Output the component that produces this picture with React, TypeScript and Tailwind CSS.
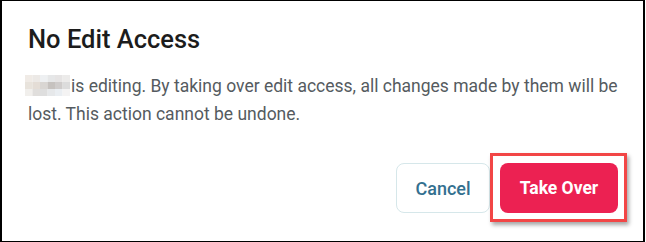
import React from "react";

const blur = [
  ["#f0ebe6", "#ece9e6", "#eef0f2", "#e6e7e8", "#e6e4e4", "#ecebea"],
  ["#e8e3dc", "#e4ddd6", "#d9d6d3", "#c6c2bf", "#cfcccb", "#dcdcdc"],
  ["#f1efec", "#e0dedc", "#dedede", "#e6e8ea", "#eaeef2", "#f4f3f3"],
];

export default function App() {
  return (
    <div className="w-[646px] h-[242px] bg-white">
      <div
        className="w-[645px] h-[242px] border-l-2 border-t border-r-2 border-b border-black bg-white flex flex-col pl-[26px] pr-[22px]"
        style={{ fontFamily: "Roboto, 'Liberation Sans', sans-serif" }}
      >
        <h1 className="mt-[22px] text-[25.5px] leading-[32px] font-medium text-[#1c1c1c]">
          No Edit Access
        </h1>
        <p className="mt-[17px] text-[17.5px] leading-[28px] text-[#555b60]">
          <svg
            width="45"
            height="21"
            viewBox="0 0 45 21"
            className="inline-block align-[-4px] ml-[-3px] mr-[1px]"
          >
            {blur.map((row, r) =>
              row.map((c, i) => (
                <rect key={`${r}-${i}`} x={i * 7.5} y={r * 7} width={7.6} height={7.1} fill={c} />
              ))
            )}
          </svg>
          is editing. By taking over edit access, all changes made by them will be
          lost. This action cannot be undone.
        </p>
        <div className="mt-[35px] mr-[3px] flex justify-end gap-[10px]">
          <button className="w-[94px] h-[50px] rounded-[8px] border border-[#d6e7ea] bg-white text-[18px] font-medium text-[#33708f]">
            Cancel
          </button>
          <div className="relative">
            <button className="w-[118px] h-[50px] rounded-[8px] bg-[#ec2152] text-[17.5px] font-bold text-white">
              Take Over
            </button>
            <div className="absolute left-[-10px] top-[-10px] w-[137px] h-[69px] border-[3px] border-[#f24646] shadow-[2px_3px_4px_rgba(0,0,0,0.35)] pointer-events-none" />
          </div>
        </div>
      </div>
    </div>
  );
}
